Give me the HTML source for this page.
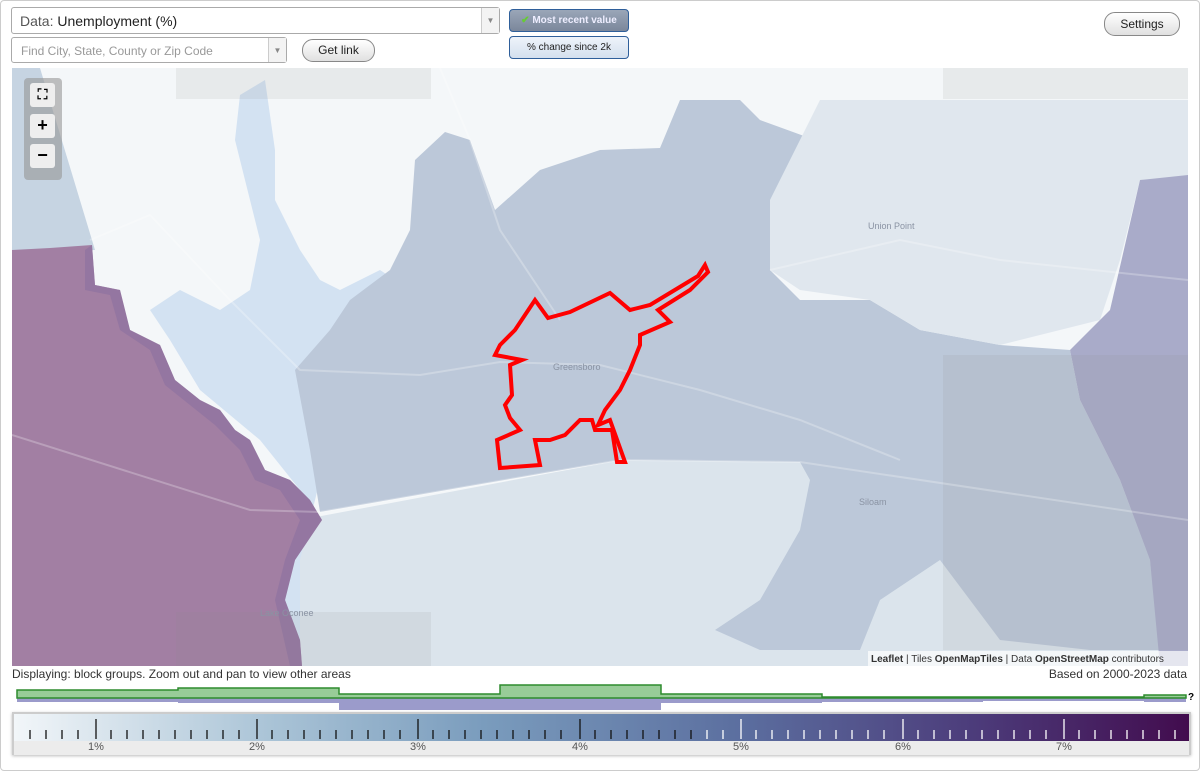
<!DOCTYPE html>
<html><head><meta charset="utf-8"><style>
*{box-sizing:border-box;margin:0;padding:0}
body{width:1200px;height:771px;background:#fff;font-family:"Liberation Sans",sans-serif;position:relative;overflow:hidden}
.frame{position:absolute;left:0;top:0;width:1200px;height:771px;border:1px solid #ccc;border-radius:4px}
.sel{position:absolute;background:#fff;border:1px solid #aaa;border-radius:3px}
.sel .arr{position:absolute;right:0;top:0;bottom:0;width:18px;border-left:1px solid #ccc;background:#f3f3f3;color:#888;font-size:8px;text-align:center}
.btn{position:absolute;border:1px solid #888;border-radius:11px;background:linear-gradient(#fff,#e0e0e0);font-size:12px;text-align:center;color:#222}
.tg{position:absolute;border:1px solid #2f5f9a;border-radius:4px;font-size:10px;text-align:center}
.zc{position:absolute;left:24px;top:78px;width:38px;height:102px;background:rgba(150,150,150,.6);border-radius:4px}
.zb{position:absolute;left:6px;width:25px;height:24px;background:#eee;border-radius:3px;text-align:center;font-weight:bold;font-size:18px;line-height:23px}
</style></head><body>
<div class="frame"></div>
<div class="sel" style="left:11px;top:7px;width:489px;height:27px"><span style="position:absolute;left:8px;top:5px;font-size:14px;color:#555">Data: <span style="color:#222">Unemployment (%)</span></span><div class="arr" style="line-height:26px">▼</div></div>
<div class="sel" style="left:11px;top:37px;width:276px;height:26px"><span style="position:absolute;left:9px;top:6px;font-size:12px;color:#999">Find City, State, County or Zip Code</span><div class="arr" style="line-height:25px">▼</div></div>
<div class="btn" style="left:302px;top:39px;width:73px;height:23px;line-height:21px">Get link</div>
<div class="tg" style="left:509px;top:9px;width:120px;height:23px;background:linear-gradient(#9aa6b8,#7b879b);color:#eef;font-weight:bold;line-height:21px"><span style="color:#6c3">✔</span> Most recent value</div>
<div class="tg" style="left:509px;top:36px;width:120px;height:23px;background:linear-gradient(#eef3fa,#d4e0ee);color:#222;line-height:21px">% change since 2k</div>
<div class="btn" style="left:1104px;top:12px;width:76px;height:24px;line-height:22px">Settings</div>

<svg style="position:absolute;left:12px;top:68px" width="1176" height="598" viewBox="12 68 1176 598">
<rect x="12" y="68" width="1176" height="598" fill="#f4f7f9"/>
<polygon fill="#dbe4ec" points="300,520 620,460 800,462 1188,515 1188,666 300,666"/>
<polygon fill="#c6d4e2" points="12,68 40,68 95,250 12,252"/>
<polygon fill="#d3e2f2" points="240,95 265,80 275,150 275,200 300,250 320,280 340,290 380,270 395,280 340,330 300,370 330,440 310,520 300,560 300,666 280,666 270,560 300,490 260,440 200,390 170,340 150,310 180,290 220,310 250,290 260,240 250,200 235,140"/>
<polygon fill="#bcc8d9" points="295,370 330,330 350,300 390,270 410,230 415,160 445,132 470,140 495,210 540,170 600,150 660,148 680,100 740,100 760,120 815,140 790,180 780,230 770,270 800,300 870,300 920,330 1000,345 1070,350 1080,400 1120,480 1150,560 1160,650 1090,650 1000,640 940,560 880,600 860,650 760,650 715,630 760,600 800,530 810,480 800,462 620,460 320,512 310,450"/>
<polygon fill="#e0e7ee" points="770,200 820,100 943,100 1188,100 1188,180 1140,180 1120,260 1100,320 1000,345 920,330 870,300 800,290 770,270"/>
<polygon fill="#a9abc9" points="1070,350 1110,310 1140,180 1188,175 1188,666 1160,666 1150,560 1120,480 1080,400"/>
<polygon fill="#a27fa3" points="12,250 50,248 92,245 95,285 120,290 130,330 160,345 175,380 200,400 220,410 235,430 250,440 265,470 290,480 310,500 322,520 295,560 285,600 300,640 302,666 12,666"/>
<polygon fill="#8a6fa0" opacity=".6" points="92,245 95,285 120,290 130,330 160,345 175,380 200,400 220,410 235,430 250,440 265,470 290,480 310,500 322,520 295,560 285,600 300,640 302,666 290,666 275,600 285,560 300,520 280,490 255,480 240,450 215,425 190,405 165,385 150,350 120,330 110,295 85,290 85,250"/>
<g fill="#8f8f8f" opacity=".12"><rect x="176" y="68" width="255" height="31"/><rect x="943" y="68" width="245" height="31"/><rect x="943" y="355" width="245" height="295"/><rect x="176" y="612" width="255" height="54"/></g>
<g stroke="#fff" stroke-opacity=".25" stroke-width="2" fill="none"><path d="M12,435 L250,510 L320,512 L620,460 L800,462 L1188,520"/><path d="M90,240 L150,215 L230,300 L300,370 L420,375 L500,362 L600,365 L700,390 L800,420 L900,460"/><path d="M440,68 L470,140 L500,230 L560,320"/><path d="M770,270 L900,240 L1000,260 L1188,280"/></g>
<polygon fill="none" stroke="#f00" stroke-width="4" stroke-linejoin="miter" points="535,300 548,318 570,312 610,293 630,310 650,305 698,276 705,265 708,272 690,290 658,310 670,322 640,335 640,345 630,370 620,390 605,410 598,425 610,420 625,462 617,462 612,430 595,430 592,420 580,420 565,435 550,440 535,440 540,465 500,468 497,440 520,430 510,418 505,405 512,395 510,365 522,360 495,355 500,345 515,330"/>
<g font-size="9" fill="#8a93a3"><text x="553" y="370">Greensboro</text><text x="868" y="229">Union Point</text><text x="859" y="505">Siloam</text><text x="260" y="616">Lake Oconee</text></g>
<rect x="868" y="651" width="320" height="15" fill="#fff" opacity=".7"/>
<text x="871" y="662" font-size="10" fill="#333"><tspan font-weight="bold">Leaflet</tspan> | Tiles <tspan font-weight="bold">OpenMapTiles</tspan> | Data <tspan font-weight="bold">OpenStreetMap</tspan> contributors</text>
</svg>
<div class="zc"><div class="zb" style="top:5px;font-size:14px">⛶</div><div class="zb" style="top:36px">+</div><div class="zb" style="top:66px">−</div></div>

<div style="position:absolute;left:12px;top:667px;font-size:12px;color:#333">Displaying: block groups. Zoom out and pan to view other areas</div>
<div style="position:absolute;right:13px;top:667px;font-size:12px;color:#333">Based on 2000-2023 data</div>

<svg style="position:absolute;left:0;top:680px" width="1200" height="32">
<path fill="#9b9bcb" d="M17,18 H1186 V22 H1144 V21 H983 V22 H822 V23 H661 V30 H339 V23 H178 V22 H17 Z"/>
<path fill="#98cc98" stroke="#2e8b2e" stroke-width="1.5" d="M17,18 V10 H178 V8 H339 V14 H500 V5 H661 V14 H822 V17 H983 V17 H1144 V15 H1186 V18 Z"/>
<text x="1188" y="20" font-size="10" font-weight="bold">?</text>
</svg>

<div style="position:absolute;left:12px;top:712px;width:1179px;height:43px;border:2px solid #ccc;box-shadow:0 1px 3px #bbb">
<div style="position:absolute;left:0;top:0;right:0;height:27px;background:linear-gradient(90deg,#f2f6f9,#a9c3d6 22%,#7a9cbd 40%,#5b6e9f 62%,#4c3b7a 82%,#420c4e)"></div>
<div style="position:absolute;left:0;top:27px;right:0;height:14px;background:#ececec"></div>
</div>
<svg style="position:absolute;left:12px;top:712px" width="1179" height="43">
<g stroke-width="1.3">
<path stroke="#111" d="M18,18V27M34,18V27M50,18V27M66,18V27M84,7V27M99,18V27M115,18V27M131,18V27M147,18V27M163,18V27M179,18V27M195,18V27M211,18V27M227,18V27M245,7V27M260,18V27M276,18V27M292,18V27M308,18V27M324,18V27M340,18V27M356,18V27M372,18V27M388,18V27M406,7V27M421,18V27M437,18V27M453,18V27M469,18V27M485,18V27M501,18V27M517,18V27M533,18V27M549,18V27M568,7V27M583,18V27M599,18V27M615,18V27M631,18V27M647,18V27M663,18V27M679,18V27"/>
<path stroke="#fff" d="M695,18V27M711,18V27M729,7V27M744,18V27M760,18V27M776,18V27M792,18V27M808,18V27M824,18V27M840,18V27M856,18V27M872,18V27M891,7V27M906,18V27M922,18V27M938,18V27M954,18V27M970,18V27M986,18V27M1002,18V27M1018,18V27M1034,18V27M1052,7V27M1067,18V27M1083,18V27M1099,18V27M1115,18V27M1131,18V27M1147,18V27M1163,18V27"/>
</g>
<g font-size="11" fill="#555" text-anchor="middle"><text x="84" y="38">1%</text><text x="245" y="38">2%</text><text x="406" y="38">3%</text><text x="568" y="38">4%</text><text x="729" y="38">5%</text><text x="891" y="38">6%</text><text x="1052" y="38">7%</text></g>
</svg>
</body></html>
